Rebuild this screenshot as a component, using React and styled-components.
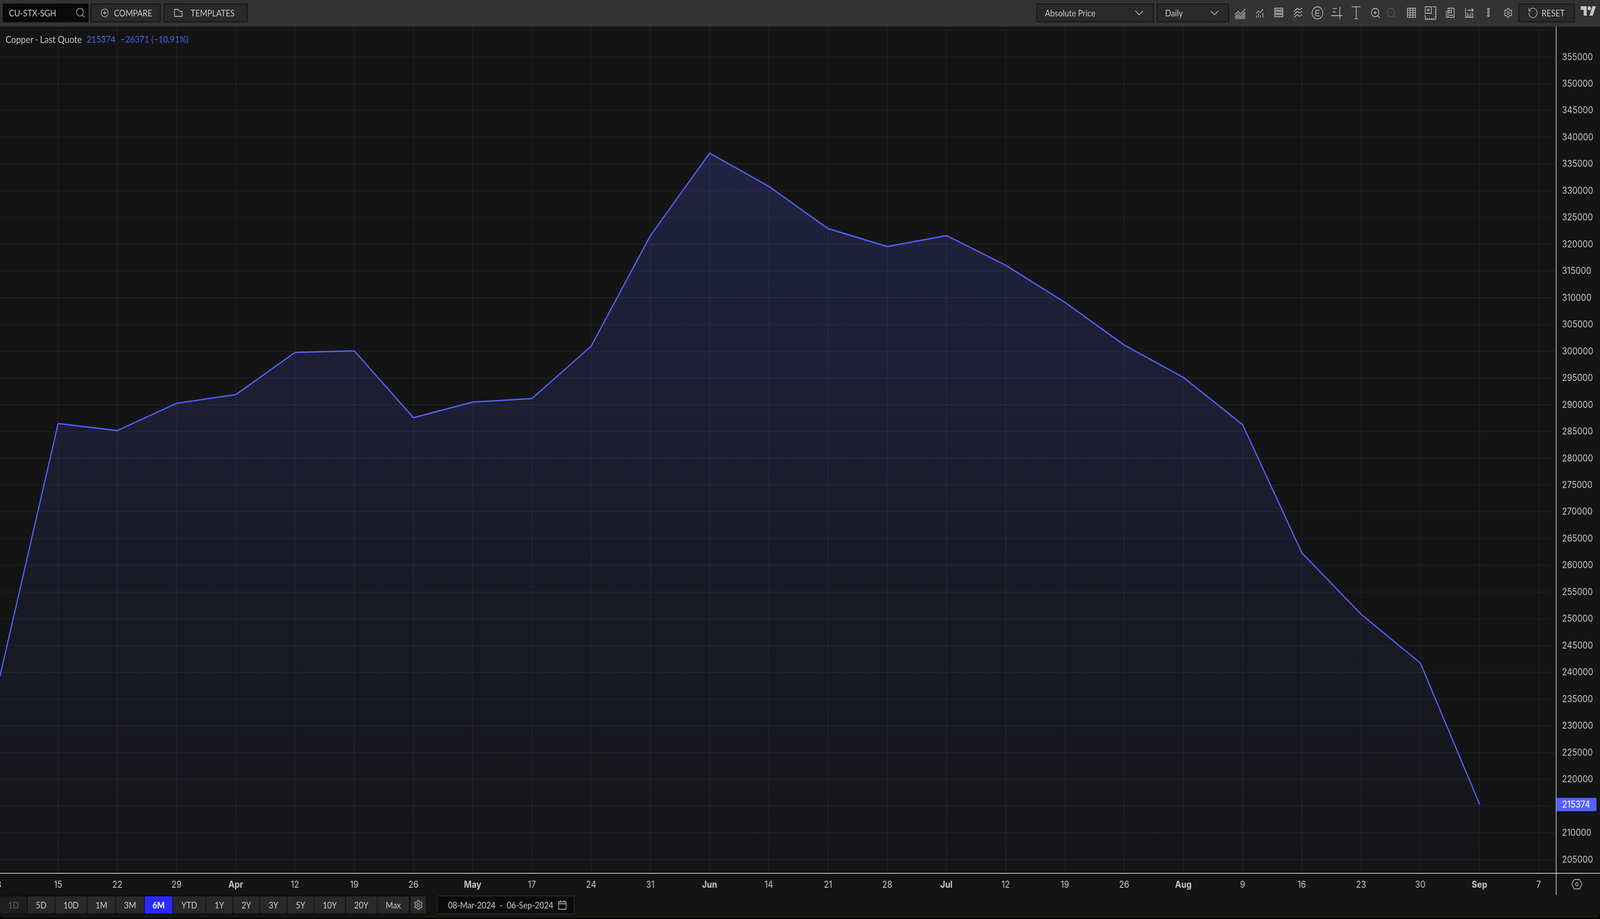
import React from "react";
import styled, { createGlobalStyle } from "styled-components";
import { Settings, RotateCcw } from "lucide-react";

const DESIGN_W = 4632;
const PLOT_W = 4504;
const PLOT_TOP = 68;
const PLOT_H = 2166;
const ICON = "#c4c4c4";

const tickX = (i) => 168.3 + 171.46 * i;
const priceY = (p) => 145.7 + ((355000 - p) / 5000) * 68.48;

const TICKS = [
  ["8"], ["15"], ["22"], ["29"], ["Apr", true], ["12"], ["19"], ["26"], ["May", true],
  ["17"], ["24"], ["31"], ["Jun", true], ["14"], ["21"], ["28"], ["Jul", true], ["12"],
  ["19"], ["26"], ["Aug", true], ["9"], ["16"], ["23"], ["30"], ["Sep", true], ["7"],
];

const PRICES = [];
for (let p = 355000; p >= 205000; p -= 5000) PRICES.push(p);

// y of the line at each weekly tick, first point is the left edge
const LINE_Y = [1084, 1102, 1032, 1010, 902, 898, 1069, 1029, 1020, 886, 603, 392, 477, 585, 631, 603, 679, 774, 883, 966, 1087, 1415, 1572, 1697, 2058];
const linePoints = [[0, 1730], ...LINE_Y.map((y, i) => [tickX(i), y])];
const lineD = linePoints.map((p) => p.join(",")).join(" ");
const areaD = `${lineD} ${tickX(24)},2234 0,2234`;

const RANGES = [
  ["1D", 78], ["5D", 78], ["10D", 91], ["1M", 81], ["3M", 81], ["6M", 80], ["YTD", 94],
  ["1Y", 76], ["2Y", 76], ["3Y", 77], ["5Y", 76], ["10Y", 89], ["20Y", 90], ["Max", 91],
];

const GlobalStyle = createGlobalStyle`
  html, body {
    margin: 0;
    padding: 0;
    background: #0a0904;
  }
  * {
    box-sizing: border-box;
  }
`;

const Page = styled.div`
  width: 100vw;
  height: 2352px;
  overflow: hidden;
  background: #0a0904;
`;

const Window = styled.div`
  display: flex;
  flex-direction: column;
  width: ${DESIGN_W}px;
  height: 2346px;
  background: #141414;
  border-radius: 0 0 14px 14px;
  box-shadow: 0 1px 0 #2c2c2c;
  overflow: hidden;
  transform-origin: 0 0;
`;

const Toolbar = styled.div`
  display: flex;
  align-items: flex-start;
  height: 68px;
  flex: none;
  padding: 9px 11px 0 8px;
  background: #333333;
  font-family: "Lato", "Liberation Sans", sans-serif;
  font-size: 23px;
  color: #c6c6c6;
`;

const SymbolBox = styled.div`
  display: flex;
  align-items: center;
  justify-content: space-between;
  width: 248px;
  height: 48px;
  margin-right: 6px;
  padding: 0 9px 0 18px;
  background: #090909;
`;

const ToolButton = styled.div`
  display: flex;
  align-items: center;
  gap: ${(p) => p.$gap}px;
  width: ${(p) => p.$w}px;
  height: 48px;
  margin-right: ${(p) => p.$mr || 0}px;
  padding-left: 28px;
  background: #292929;
  border: 2px solid #0f0f0f;
`;

const Select = styled.div`
  display: flex;
  align-items: center;
  justify-content: space-between;
  width: ${(p) => p.$w}px;
  height: 48px;
  margin-right: ${(p) => p.$mr}px;
  padding: 0 28px 0 22px;
  background: #292929;
  border: 2px solid #0f0f0f;
`;

const ToolbarRight = styled.div`
  display: flex;
  align-items: flex-start;
  margin-left: auto;
`;

const IconSlot = styled.div`
  display: flex;
  align-items: center;
  justify-content: center;
  width: 56px;
  height: 48px;
  margin-left: ${(p) => p.$nudge || 0}px;
`;

const ResetButton = styled(ToolButton)`
  padding-left: 24px;
  margin-left: 2px;
`;

const Logo = styled.svg`
  margin: 7px 0 0 16px;
  fill: #c6c6c6;
`;

const ChartGrid = styled.div`
  display: grid;
  flex: 1;
  grid-template-columns: 4504px 128px;
  grid-template-rows: 2168px 54px;
  font-family: "Inter", "Liberation Sans", sans-serif;
  font-size: 24px;
  color: #c4c4c4;
`;

const Plot = styled.div`
  position: relative;
  border-bottom: 2px solid #cccccc;
  overflow: hidden;
`;

const PlotSvg = styled.svg`
  display: block;
`;

const Legend = styled.div`
  position: absolute;
  left: 16px;
  top: 17px;
  display: flex;
  gap: 14px;
  font-family: "Lato", "Liberation Sans", sans-serif;
  font-size: 25px;
  line-height: 30px;
  white-space: pre;
`;

const LegendValue = styled.span`
  color: #5460f0;
  font-size: 24px;
`;

const PriceAxis = styled.div`
  position: relative;
  display: flex;
  flex-direction: column;
  padding: 43.5px 0 0 16px;
  border-left: 2px solid #cccccc;
  border-bottom: 2px solid #cccccc;
  overflow: hidden;
`;

const PriceLabel = styled.div`
  flex: none;
  height: 68.48px;
  line-height: 68.48px;
`;

const LastPrice = styled.div`
  position: absolute;
  left: -2px;
  top: 1974px;
  width: 118px;
  height: 34px;
  padding-left: 18px;
  line-height: 34px;
  background: #5460ff;
  color: #ffffff;
  border-radius: 0 4px 4px 0;
`;

const TimeAxis = styled.div`
  display: flex;
  overflow: hidden;
`;

const TimeLabel = styled.div`
  flex: none;
  width: 171.46px;
  line-height: 56px;
  text-align: center;
  font-weight: ${(p) => (p.$month ? 700 : 400)};
  &:first-child {
    margin-left: -89px;
  }
`;

const AxisCorner = styled.div`
  display: flex;
  align-items: center;
  justify-content: center;
  padding: 0 8px 0 0;
  border-left: 2px solid #cccccc;
`;

const RangeRow = styled.div`
  display: flex;
  align-items: flex-start;
  flex: none;
  height: 56px;
  padding-top: 2px;
  font-family: "Lato", "Liberation Sans", sans-serif;
  font-size: 23px;
  color: #c6c6c6;
`;

const RangeGroup = styled.div`
  display: flex;
  gap: 2px;
  padding: 2px;
  padding-left: 0;
  background: #0b0b0b;
`;

const RangeButton = styled.div`
  display: flex;
  align-items: center;
  justify-content: center;
  width: ${(p) => p.$w}px;
  height: 44px;
  background: ${(p) => (p.$active ? "#2a2aff" : p.$disabled ? "#1e1e1e" : "#292929")};
  color: ${(p) => (p.$active ? "#ffffff" : p.$disabled ? "#666666" : "#c6c6c6")};
  font-weight: ${(p) => (p.$active ? 700 : 400)};
`;

const RangeGear = styled(RangeButton)`
  margin-left: 2px;
`;

const DateRange = styled.div`
  display: flex;
  align-items: center;
  width: 398px;
  height: 48px;
  margin-left: 30px;
  padding-left: 30px;
  background: #0b0b0b;
  border: 2px solid #2b2b2b;
`;

const DateDash = styled.span`
  margin: 0 12px;
`;

const CalendarIcon = styled.svg`
  margin-left: 14px;
`;

const Line = ({ d, color = ICON, w = 1.8 }) => (
  <path d={d} fill="none" stroke={color} strokeWidth={w} />
);

const Icon40 = ({ children }) => (
  <svg width="40" height="40" viewBox="0 0 40 40">
    {children}
  </svg>
);

const MagnifierIcon = ({ color = ICON, mark }) => (
  <Icon40>
    <circle cx="19" cy="19.3" r="10.8" fill="none" stroke={color} strokeWidth="1.8" />
    <Line d="M26.5 27 32.3 32.5" color={color} />
    <Line d={mark === "+" ? "M14.7 19.3H23.3M19 15V23.6" : "M14.7 19.3H23.3"} color={color} />
  </Icon40>
);

const TOOL_ICONS = [
  <Icon40 key="area">
    <defs>
      <pattern id="dither" width="3.4" height="3.4" patternUnits="userSpaceOnUse">
        <rect width="1.7" height="1.7" fill={ICON} />
        <rect x="1.7" y="1.7" width="1.7" height="1.7" fill={ICON} />
      </pattern>
    </defs>
    <path d="M5 36V27L14.7 20.5 21.3 27 35 14V36Z" fill="url(#dither)" />
    <Line d="M5.3 23.7 14.7 16.3 21.3 23 34.7 9.7" />
  </Icon40>,
  <Icon40 key="bars">
    <Line d="M11 21 17 15.3 22.6 18.7 31 10.3" />
    <Line d="M11.7 26.3V31.7M17.7 21V31.7M23.7 26.3V31.7M30.3 20V31.7" />
  </Icon40>,
  <Icon40 key="stack">
    <Line d="M8.3 8H31.7V12.7H8.3ZM8.3 16H31.7V21H8.3ZM8.3 24.3H31.7V29.7H8.3Z" w="2" />
  </Icon40>,
  <Icon40 key="waves">
    <Line d="M8 17 17.3 8 24 12 32.3 8M8 25 17.3 16 24 20.5 32.3 16M8 32 17.3 24.3 24 28.7 32.3 24.3" />
  </Icon40>,
  <Icon40 key="event">
    <circle cx="20" cy="20" r="15.5" fill="none" stroke={ICON} strokeWidth="1.8" />
    <Line d="M26 13.7H15V27.7H26M15 20.5H25" />
  </Icon40>,
  <Icon40 key="draw">
    <Line d="M28.7 3.7V36.3M3.7 27H36M8.7 8.7H20M8.7 17.7H17" />
  </Icon40>,
  <Icon40 key="text">
    <Line d="M7 4.3H33M20.3 4.3V34.7M15.3 34.7H25.3" />
  </Icon40>,
  <MagnifierIcon key="in" mark="+" />,
  <MagnifierIcon key="out" mark="-" color="#5a5a5a" />,
  <Icon40 key="table">
    <Line d="M8.3 8H31.7V31.3H8.3ZM8.3 13.7H31.7M8.3 19.7H31.7M8.3 25.7H31.7M16 8V31.3M24 8V31.3" />
  </Icon40>,
  <Icon40 key="layout">
    <Line d="M4 4.3H21.7V21H4ZM12.7 8V17M8 12.7H17.5M25 4.3H35V36.3H4V24.7" />
    <Line d="M31.5 11.7H35M31.5 17.7H35M31.5 23.7H35M31.5 29.7H35M10 33V36.3M17 33V36.3M23.5 33V36.3M29.5 33V36.3" />
  </Icon40>,
  <Icon40 key="news">
    <Line d="M14 8H31.7V31.3H14ZM14 16.3H9V31.3H14M17.3 13H24V19.7H17.3ZM17 26H28.5" />
  </Icon40>,
  <Icon40 key="export">
    <Line d="M8.7 8V31.3H32" />
    <Line d="M14 31V19.7M18.7 31V23M24 31V19.7M29.3 31V20.3" />
    <Line d="M14.7 13H31.3M26.3 9 31.3 13 26.3 17" />
  </Icon40>,
  <Icon40 key="dots">
    <circle cx="20" cy="11" r="2.5" fill="none" stroke={ICON} strokeWidth="1.8" />
    <circle cx="20" cy="18.8" r="2.5" fill="none" stroke={ICON} strokeWidth="1.8" />
    <circle cx="20" cy="27" r="2.5" fill="none" stroke={ICON} strokeWidth="1.8" />
  </Icon40>,
  <Settings key="gear" size={28} color={ICON} strokeWidth={1.5} />,
];

const NUDGES = [0, 0, 0, 0, 0, 0, 0, 0, -10, 2, 0, 0, 0, -1, 1];

const Chevron = () => (
  <svg width="24" height="12" viewBox="0 0 24 12">
    <Line d="M1 1 12 11 23 1" />
  </svg>
);

export default function App() {
  // the layout is written at 4632 wide, squeeze it if the window is narrower
  const fit = Math.min(1, window.innerWidth / DESIGN_W);

  return (
    <Page>
      <GlobalStyle />
      <Window style={{ transform: `scaleX(${fit})` }}>
        <Toolbar>
          <SymbolBox>
            CU-STX-SGH
            <svg width="28" height="26" viewBox="0 0 28 26">
              <circle cx="12.5" cy="11" r="10" fill="none" stroke={ICON} strokeWidth="1.6" />
              <Line d="M19.5 18.5 25.5 25" />
            </svg>
          </SymbolBox>
          <ToolButton $w={203} $gap={16} $mr={9}>
            <svg width="22" height="22" viewBox="0 0 22 22">
              <circle cx="11" cy="11" r="10" fill="none" stroke={ICON} strokeWidth="1.6" />
              <Line d="M6 11H16M11 6V16" />
            </svg>
            COMPARE
          </ToolButton>
          <ToolButton $w={243} $gap={24}>
            <svg width="24" height="20" viewBox="0 0 24 20">
              <Line d="M1 19V1H11L17 6H23V19Z" w="2" />
            </svg>
            TEMPLATES
          </ToolButton>
          <ToolbarRight>
            <Select $w={339} $mr={9}>
              Absolute Price
              <Chevron />
            </Select>
            <Select $w={209} $mr={4}>
              Daily
              <Chevron />
            </Select>
            {TOOL_ICONS.map((icon, i) => (
              <IconSlot key={i} $nudge={NUDGES[i]}>
                {icon}
              </IconSlot>
            ))}
            <ResetButton $w={164} $gap={9}>
              <RotateCcw size={32} color={ICON} strokeWidth={1.1} />
              RESET
            </ResetButton>
            <Logo width="45" height="24" viewBox="0 4 36 18" preserveAspectRatio="none">
              <path d="M14 22H7V11H0V4h14v18zM28 22h-8l7.5-18h8L28 22z" />
              <circle cx="20" cy="8" r="4" />
            </Logo>
          </ToolbarRight>
        </Toolbar>

        <ChartGrid>
          <Plot>
            <PlotSvg width={PLOT_W} height={PLOT_H} viewBox={`0 ${PLOT_TOP} ${PLOT_W} ${PLOT_H}`}>
              <defs>
                <linearGradient id="areaFill" x1="0" y1="0" x2="0" y2="1">
                  <stop offset="0" stopColor="#5460ff" stopOpacity="0.19" />
                  <stop offset="1" stopColor="#5460ff" stopOpacity="0.01" />
                </linearGradient>
              </defs>
              <polygon points={areaD} fill="url(#areaFill)" />
              {[360000, ...PRICES].map((p) => (
                <line key={p} x1="0" x2={PLOT_W} y1={priceY(p)} y2={priceY(p)} stroke="#b4b4ff" strokeOpacity="0.08" strokeWidth="2" />
              ))}
              {TICKS.map((t, i) => (
                <line key={i} x1={tickX(i - 1)} x2={tickX(i - 1)} y1={PLOT_TOP} y2={PLOT_TOP + PLOT_H} stroke="#b4b4ff" strokeOpacity="0.08" strokeWidth="2" />
              ))}
              <polyline points={lineD} fill="none" stroke="#5460ff" strokeWidth="3.4" strokeLinecap="round" strokeLinejoin="round" />
            </PlotSvg>
            <Legend>
              <span>Copper · Last Quote</span>
              <LegendValue>215374</LegendValue>
              <LegendValue>−26371 (−10.91%)</LegendValue>
            </Legend>
          </Plot>
          <PriceAxis>
            {PRICES.map((p) => (
              <PriceLabel key={p}>{p}</PriceLabel>
            ))}
            <LastPrice>215374</LastPrice>
          </PriceAxis>
          <TimeAxis>
            {TICKS.map(([label, month], i) => (
              <TimeLabel key={i} $month={month}>
                {label}
              </TimeLabel>
            ))}
          </TimeAxis>
          <AxisCorner>
            <svg width="32" height="28" viewBox="0 0 32 28">
              <path d="M1.5 14 8.5 2H23.5L30.5 14 23.5 26H8.5Z" fill="none" stroke={ICON} strokeWidth="1.8" />
              <circle cx="16" cy="14" r="4" fill="none" stroke={ICON} strokeWidth="1.8" />
            </svg>
          </AxisCorner>
        </ChartGrid>

        <RangeRow>
          <RangeGroup>
            {RANGES.map(([label, w]) => (
              <RangeButton key={label} $w={w} $active={label === "6M"} $disabled={label === "1D"}>
                {label}
              </RangeButton>
            ))}
            <RangeGear $w={45}>
              <Settings size={28} color={ICON} strokeWidth={1.5} />
            </RangeGear>
          </RangeGroup>
          <DateRange>
            08-Mar-2024
            <DateDash>-</DateDash>
            06-Sep-2024
            <CalendarIcon width="24" height="24" viewBox="0 0 24 24">
              <Line d="M1 4H23V23H1ZM1 9H23M7 0V4M17 0V4" />
            </CalendarIcon>
          </DateRange>
        </RangeRow>
      </Window>
    </Page>
  );
}
